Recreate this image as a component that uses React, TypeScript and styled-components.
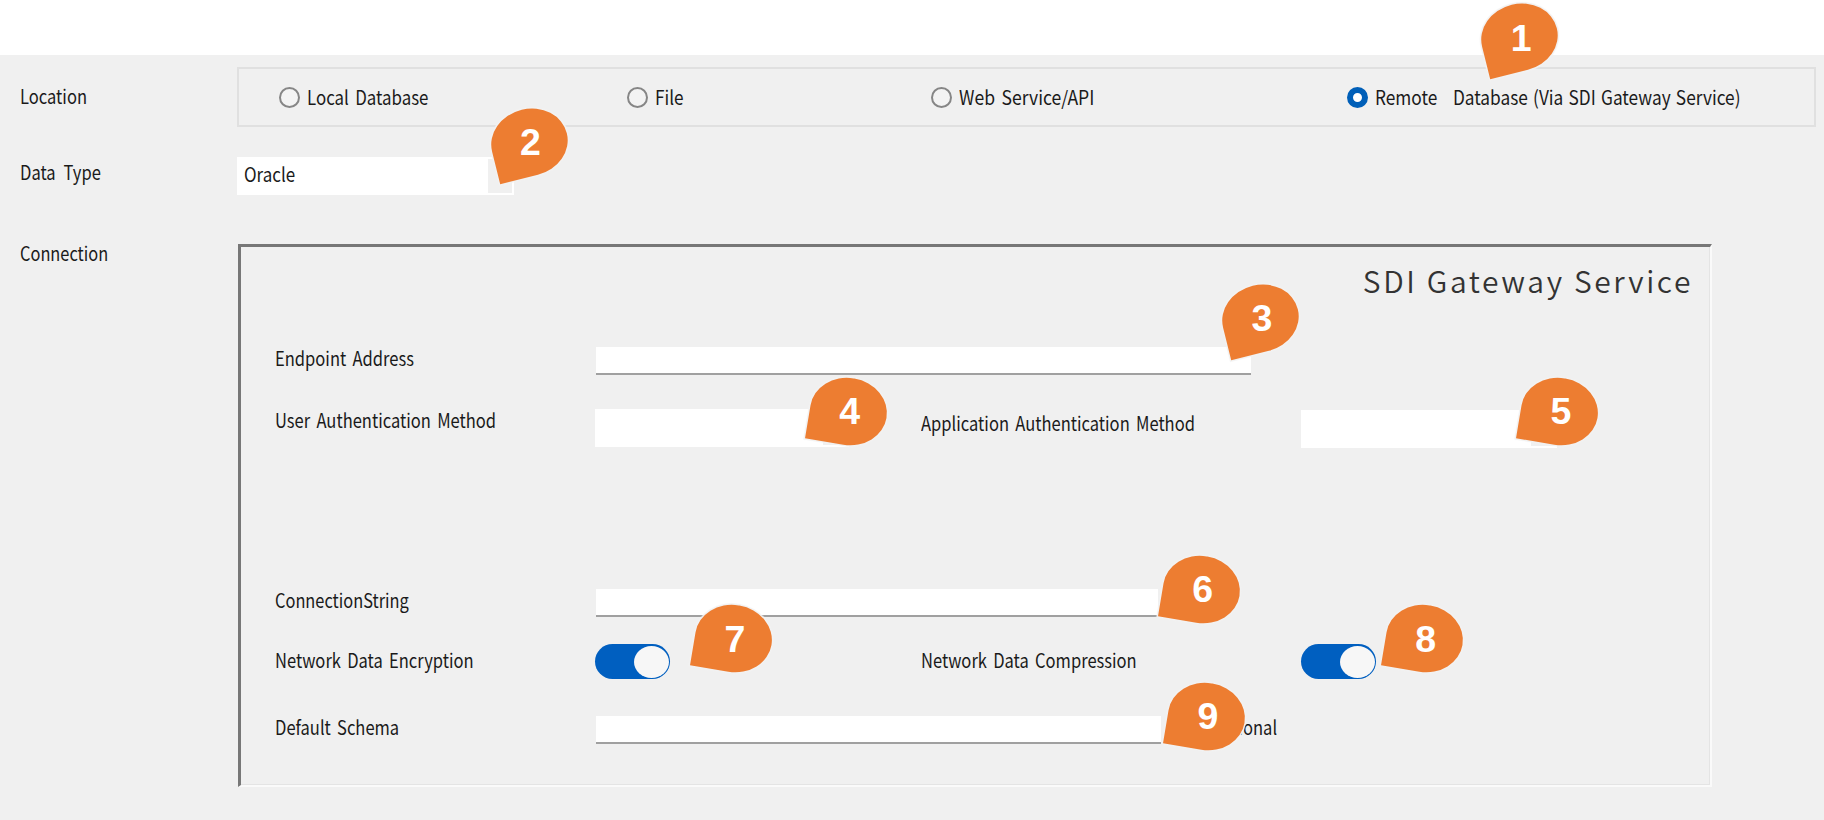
import React from "react";
import styled, { createGlobalStyle } from "styled-components";

const Global = createGlobalStyle`
  * { box-sizing: border-box; }
  body { margin: 0; background: #fff; }
`;

const Page = styled.div`
  position: relative;
  width: 1824px;
  height: 820px;
  padding-top: 55px;
  overflow: hidden;
  background: #fff;
  color: #1a1a1a;
  font-family: "Noto Sans CJK JP", "Liberation Sans", sans-serif;
  font-size: 19.5px;
`;

const Form = styled.div`
  display: flex;
  flex-direction: column;
  height: 765px;
  padding: 12px 8px 0 0;
  background: #f0f0f0;
`;

const FormRow = styled.div<{ $gap?: number }>`
  display: flex;
  align-items: flex-start;
  margin-top: ${(p) => p.$gap ?? 0}px;
`;

const Text = styled.span<{ $condense?: number; $word?: number; $top?: number }>`
  display: block;
  line-height: 20px;
  white-space: pre;
  word-spacing: ${(p) => p.$word ?? 3}px;
  margin-top: ${(p) => p.$top ?? 0}px;
  transform: scaleX(${(p) => p.$condense ?? 0.848});
  transform-origin: left center;
`;

const SectionLabel = styled(Text)`
  flex: 0 0 217px;
  margin-left: 20px;
`;

const RadioGroup = styled.div`
  display: grid;
  grid-template-columns: 348px 304px 416px 1fr;
  align-items: center;
  width: 1579px;
  height: 60px;
  padding-left: 40px;
  border: 2px solid #e0e0e0;
`;

const RadioOption = styled.div`
  display: flex;
  align-items: center;
  gap: 7px;
`;

const RadioMark = styled.span<{ $on?: boolean }>`
  width: 21px;
  height: 21px;
  margin-top: 1px;
  border-radius: 50%;
  border: ${(p) => (p.$on ? "6.5px solid #005fb8" : "2px solid #868686")};
  background: ${(p) => (p.$on ? "#fff" : "#f3f3f3")};
`;

const Select = styled.div<{ $width: number }>`
  display: flex;
  justify-content: space-between;
  width: ${(p) => p.$width}px;
  height: 38px;
  padding: 2px 2px 2px 7px;
  background: #fff;
`;

const SelectButton = styled.span`
  width: 24px;
  background: #f0f0f0;
`;

const Panel = styled.div`
  width: 1474px;
  height: 543px;
  margin-left: 1px;
  padding-left: 34px;
  border-style: solid;
  border-width: 3px 2px 2px 3px;
  border-color: #777 #fafafa #fafafa #777;
  box-shadow: inset -1px -1px 0 #e4e4e4;
`;

const Heading = styled.div`
  height: 100px;
  padding: 14px 17px 0 0;
  text-align: right;
  font-size: 30px;
  font-weight: 350;
  line-height: 38px;
  letter-spacing: 2.6px;
  color: #333;
`;

const Row = styled.div<{ $height: number; $gap?: number }>`
  display: flex;
  align-items: flex-start;
  height: ${(p) => p.$height}px;
  margin-top: ${(p) => p.$gap ?? 0}px;
`;

const FieldLabel = styled(Text)<{ $width?: number }>`
  flex: 0 0 ${(p) => p.$width ?? 320}px;
`;

const Cell = styled.div`
  flex: 0 0 326px;
`;

const Input = styled.div<{ $width: number }>`
  width: ${(p) => p.$width}px;
  height: 28px;
  margin-left: 1px;
  background: #fff;
  border-bottom: 2px solid #a0a0a0;
`;

const Track = styled.div`
  display: flex;
  justify-content: flex-end;
  width: 75px;
  height: 35px;
  padding: 1.5px;
  border-radius: 18px;
  background: #005fc0;
`;

const Knob = styled.span`
  width: 35px;
  height: 32px;
  border-radius: 50%;
  background: #f7f7f7;
`;

const Note = styled(Text)`
  margin-left: 49px;
`;

const Pin = styled.div<{ $x: number; $y: number }>`
  position: absolute;
  left: ${(p) => p.$x - 38.25}px;
  top: ${(p) => p.$y - 33.6}px;
  width: 76.5px;
  height: 67.2px;
  display: grid;
  place-items: center;
  font: bold 37.5px/40px "Liberation Sans", Arial, sans-serif;
  color: #fff;
`;

const Drop = styled.span<{ $angle: number }>`
  grid-area: 1 / 1;
  width: 76.5px;
  height: 67.2px;
  border-radius: 50% 50% 50% 0;
  background: #ed7d31;
  box-shadow: 0 0 1px 1.5px #f2f2f2;
  transform: rotate(${(p) => p.$angle}deg);
`;

const Digit = styled.span`
  grid-area: 1 / 1;
  z-index: 1;
  padding-left: 3px;
`;

const options = [
  { label: "Local Database", condense: 0.865, word: 3 },
  { label: "File", condense: 0.88, word: 0 },
  { label: "Web Service/API", condense: 0.9, word: 3 },
  { label: "Remote   Database (Via SDI Gateway Service)", condense: 0.886, word: 1.5, on: true },
];

const pins = [
  { x: 1519.6, y: 37.8, angle: -14 },
  { x: 529, y: 142.5, angle: -14 },
  { x: 1260.4, y: 318.5, angle: -14 },
  { x: 848.3, y: 411.5, angle: 9.5 },
  { x: 1559.4, y: 411.5, angle: 9.5 },
  { x: 1201.2, y: 589.5, angle: 9.5 },
  { x: 733.5, y: 638.6, angle: 9.5 },
  { x: 1424.2, y: 638.6, angle: 9.5 },
  { x: 1206.5, y: 716.2, angle: 9.5 },
];

const Toggle = () => (
  <Track>
    <Knob />
  </Track>
);

export default function App() {
  return (
    <Page>
      <Global />
      <Form>
        <FormRow>
          <SectionLabel $top={19}>Location</SectionLabel>
          <RadioGroup>
            {options.map((o) => (
              <RadioOption key={o.label}>
                <RadioMark $on={o.on} />
                <Text $condense={o.condense} $word={o.word}>{o.label}</Text>
              </RadioOption>
            ))}
          </RadioGroup>
        </FormRow>
        <FormRow $gap={30}>
          <SectionLabel $top={5} $word={5}>Data Type</SectionLabel>
          <Select $width={277}>
            <Text $top={5} $condense={0.87}>Oracle</Text>
            <SelectButton />
          </Select>
        </FormRow>
        <FormRow $gap={49}>
          <SectionLabel $top={-1} $condense={0.84}>Connection</SectionLabel>
          <Panel>
            <Heading>SDI Gateway Service</Heading>
            <Row $height={28}>
              <FieldLabel $top={1}>Endpoint Address</FieldLabel>
              <Input $width={655} />
            </Row>
            <Row $height={39} $gap={34}>
              <FieldLabel $top={1}>User Authentication Method</FieldLabel>
              <Cell>
                <Select $width={254}>
                  <span />
                  <SelectButton />
                </Select>
              </Cell>
              <FieldLabel $width={380} $top={4}>Application Authentication Method</FieldLabel>
              <Row $height={38} $gap={1}>
                <Select $width={256}>
                  <span />
                  <SelectButton />
                </Select>
              </Row>
            </Row>
            <Row $height={28} $gap={141}>
              <FieldLabel $top={1} $condense={0.84}>ConnectionString</FieldLabel>
              <Input $width={562} />
            </Row>
            <Row $height={35} $gap={27}>
              <FieldLabel $top={6}>Network Data Encryption</FieldLabel>
              <Cell>
                <Toggle />
              </Cell>
              <FieldLabel $width={380} $top={6}>Network Data Compression</FieldLabel>
              <Toggle />
            </Row>
            <Row $height={28} $gap={37}>
              <FieldLabel $top={1}>Default Schema</FieldLabel>
              <Input $width={565} />
              <Note $top={1}>Optional</Note>
            </Row>
          </Panel>
        </FormRow>
      </Form>
      {pins.map((p, i) => (
        <Pin key={i} $x={p.x} $y={p.y}>
          <Drop $angle={p.angle} />
          <Digit>{i + 1}</Digit>
        </Pin>
      ))}
    </Page>
  );
}
